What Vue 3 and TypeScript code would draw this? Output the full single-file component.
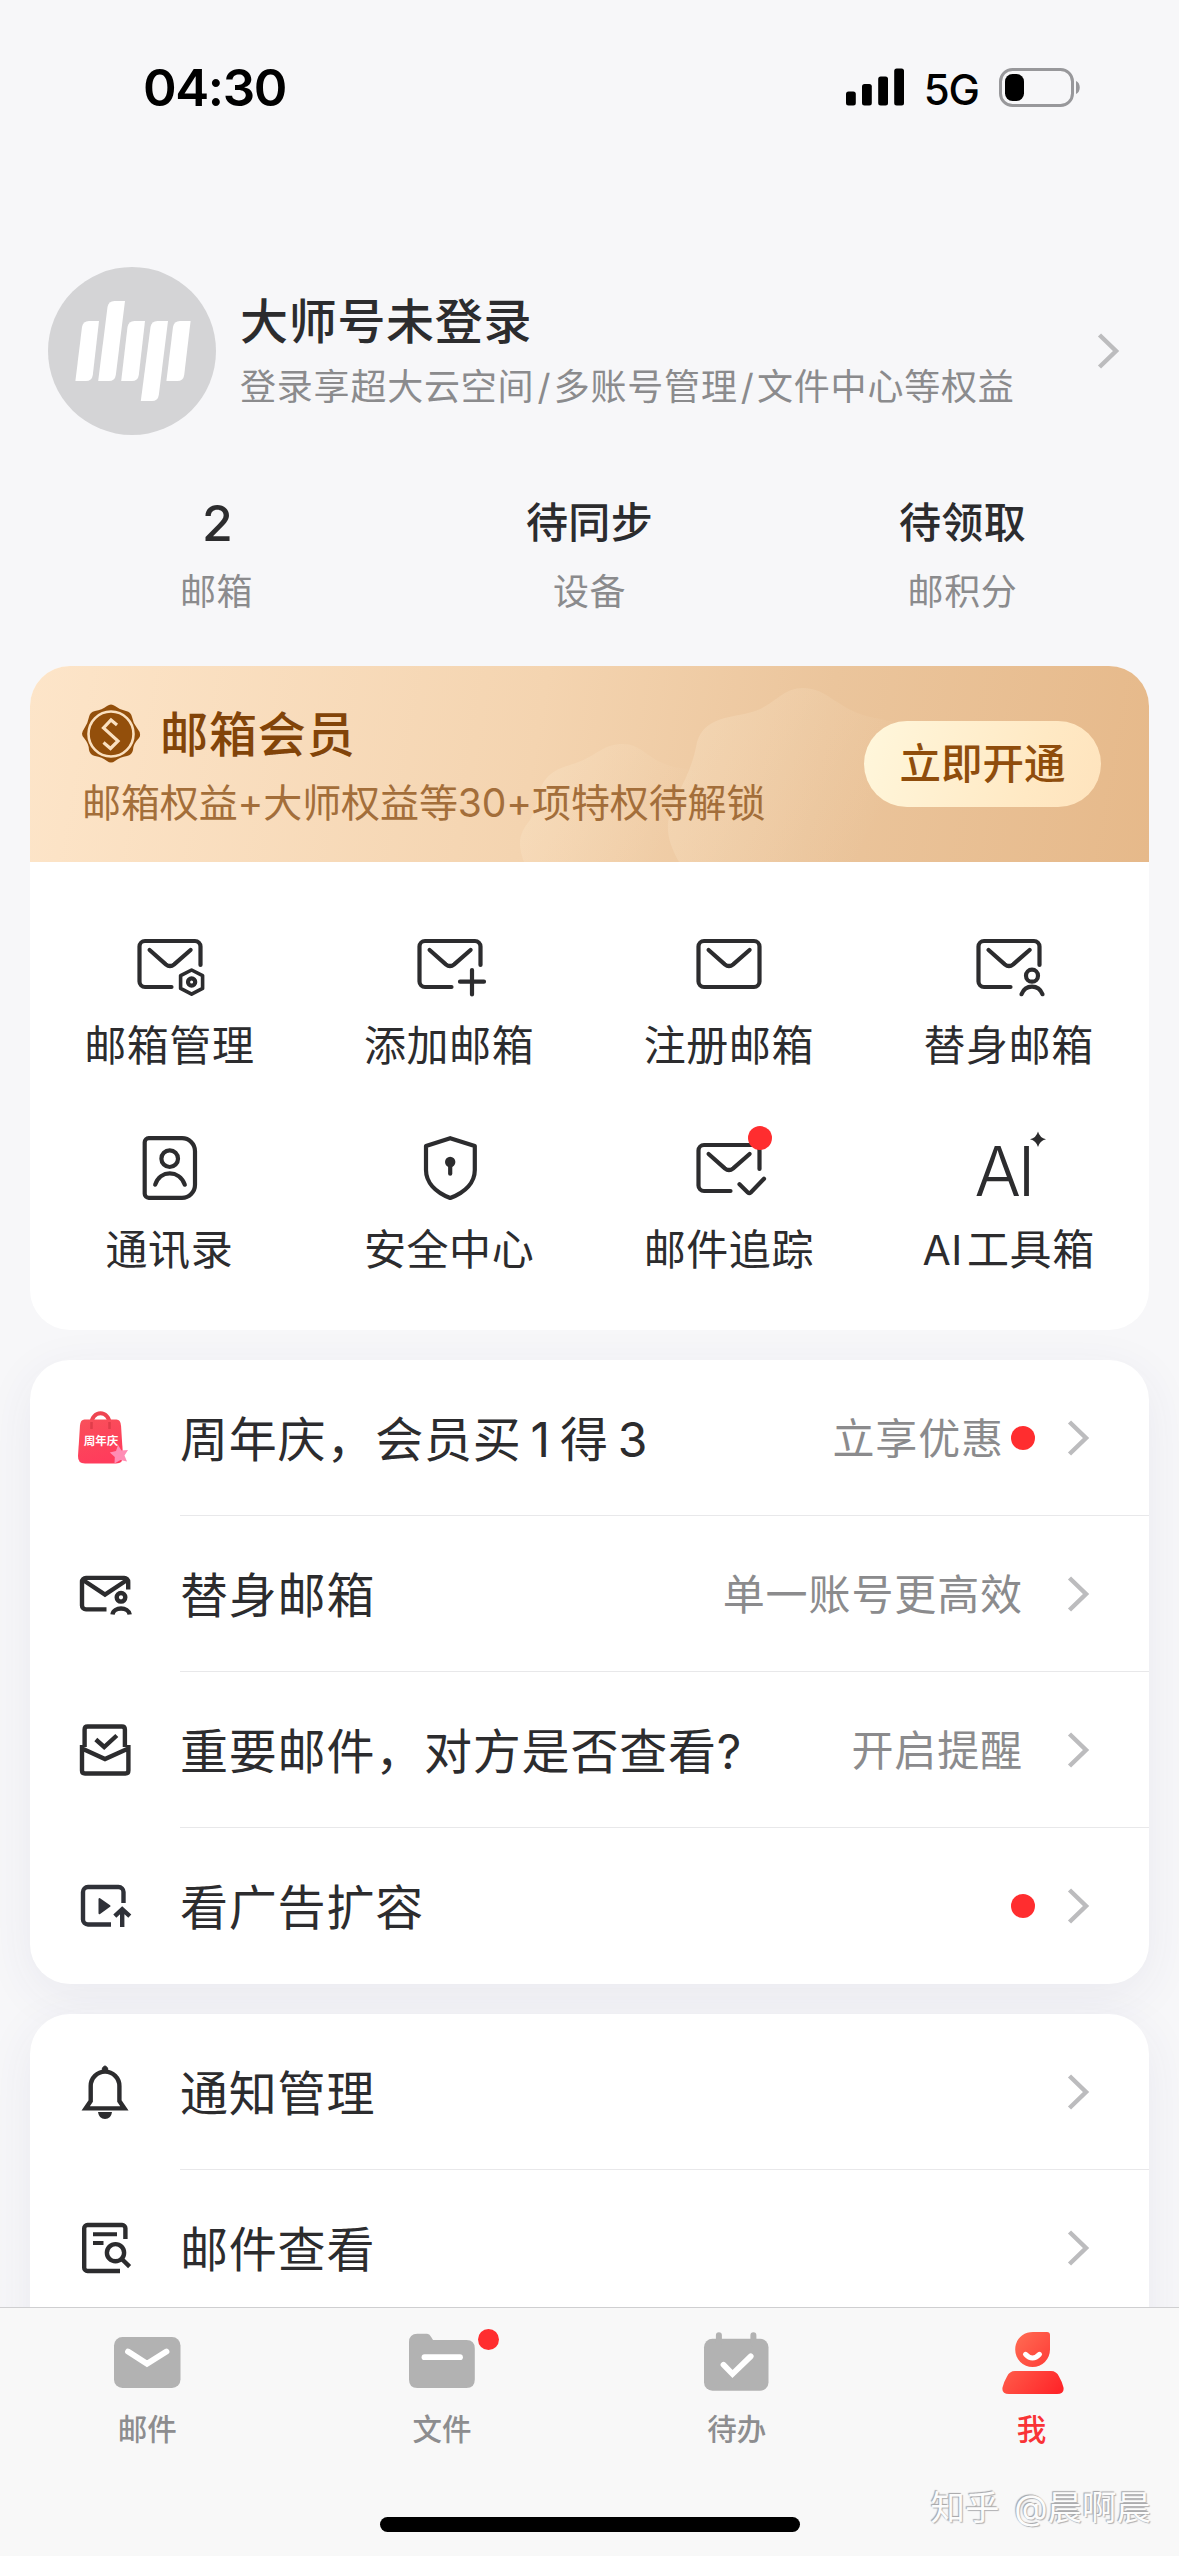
<script setup lang="ts">
interface Tool { id: string; label: string; latin?: string; badge?: boolean }
interface Segment { text: string; latin?: boolean }
interface Entry { id: string; title: Segment[]; note?: string; dot?: boolean }
interface Tab { id: string; label: string; badge?: boolean; active?: boolean }

const stats: { value: string; label: string }[] = [
  { value: '2', label: '邮箱' },
  { value: '待同步', label: '设备' },
  { value: '待领取', label: '邮积分' },
]

const tools: Tool[] = [
  { id: 'manage', label: '邮箱管理' },
  { id: 'add', label: '添加邮箱' },
  { id: 'register', label: '注册邮箱' },
  { id: 'alias', label: '替身邮箱' },
  { id: 'contacts', label: '通讯录' },
  { id: 'security', label: '安全中心' },
  { id: 'track', label: '邮件追踪', badge: true },
  { id: 'ai', label: '工具箱', latin: 'AI' },
]

const groups: Entry[][] = [
  [
    {
      id: 'anniversary',
      title: [{ text: '周年庆，会员买' }, { text: '1', latin: true }, { text: '得' }, { text: '3', latin: true }],
      note: '立享优惠',
      dot: true,
    },
    { id: 'alias', title: [{ text: '替身邮箱' }], note: '单一账号更高效' },
    { id: 'receipt', title: [{ text: '重要邮件，对方是否查看?' }], note: '开启提醒' },
    { id: 'video', title: [{ text: '看广告扩容' }], dot: true },
  ],
  [
    { id: 'bell', title: [{ text: '通知管理' }] },
    { id: 'view', title: [{ text: '邮件查看' }] },
  ],
]

const tabs: Tab[] = [
  { id: 'mail', label: '邮件' },
  { id: 'files', label: '文件', badge: true },
  { id: 'todo', label: '待办' },
  { id: 'me', label: '我', active: true },
]

const cutEnvelope = 'M43.5 65H17a5.5 5.5 0 0 1-5.5-5.5v-35A5.5 5.5 0 0 1 17 19h50a5.5 5.5 0 0 1 5.5 5.5v18.500'
const flap = 'M21.600 28l16.200 14.300q4.200 3.400 8.400 0L62.600 28'
</script>

<template>
  <div class="page">
    <main class="content">
      <header class="status">
        <span class="time">04:30</span>
        <div class="signals">
          <svg class="bars" width="58" height="38" viewBox="0 0 58 38">
            <rect x="0" y="23.500" width="9.800" height="14" rx="2.500" />
            <rect x="16" y="16" width="9.800" height="21.500" rx="2.500" />
            <rect x="32.200" y="8.500" width="9.800" height="29" rx="2.500" />
            <rect x="48.200" y="0.500" width="9.800" height="37" rx="2.500" />
          </svg>
          <span class="net">5G</span>
          <svg class="battery" width="82" height="39" viewBox="0 0 82 39">
            <rect x="1.500" y="1.500" width="72" height="36" rx="12" fill="none" stroke="#98989b" stroke-width="3" />
            <path d="M77 13c5 2 5 11 0 13z" fill="#98989b" />
            <rect x="6" y="6" width="19" height="27" rx="7.500" fill="#000" />
          </svg>
        </div>
      </header>

      <section class="profile">
        <svg class="avatar" width="168" height="168" viewBox="0 0 168 168">
          <circle cx="84" cy="84" r="84" fill="#d4d4d6" />
          <g fill="#fff">
            <path d="M34 60q1-6 7-6h10L44.800 108q-.8 6-7 6H27.400z" />
            <path d="M59.500 40q1-6 7-6h10.500L67.800 108q-.8 6-7 6H50.200z" />
            <path d="M79.500 60q1-6 7-6h10.500L90.800 108q-.8 6-7 6H73.200z" />
            <path d="M102.500 60q1-6 7-6H120L110.800 128q-.8 6-7 6H92.800z" />
            <path d="M125 60q1-6 7-6h10.600L136.200 108q-.8 6-7 6h-10.800z" />
          </g>
        </svg>
        <div class="who">
          <div class="name">大师号未登录</div>
          <div class="perks">登录享超大云空间<i>/</i>多账号管理<i>/</i>文件中心等权益</div>
        </div>
        <svg class="chevron" width="23" height="38" viewBox="0 0 23 38"><path d="M2.500 3L19 19 2.500 35" /></svg>
      </section>

      <section class="stats">
        <div v-for="s in stats" :key="s.label" class="stat">
          <div class="value">{{ s.value }}</div>
          <div class="label">{{ s.label }}</div>
        </div>
      </section>

      <section class="card member">
        <div class="banner">
          <svg class="waves" width="1119" height="196" viewBox="0 0 1119 196">
            <defs>
              <linearGradient id="wave" x1="0" y1="0" x2="1" y2="0.300">
                <stop offset="0" stop-color="#fff0d8" stop-opacity="0.280" />
                <stop offset="0.850" stop-color="#fff0d8" stop-opacity="0" />
              </linearGradient>
            </defs>
            <path fill="url(#wave)" d="M494 196C487 177 489 168 500 154C510 138 506 128 511 121C520 101 538 101 551 95C568 88 574 78 593 78C614 78 618 97 650 102C690 108 690 130 695 150L705 196z" />
            <path fill="url(#wave)" d="M649 196C636 172 634 158 645 134C657 110 663 98 667 76C675 50 702 52 722 46C745 39 752 22 773 22C798 22 805 42 840 51C890 60 905 70 912 95C930 130 950 140 940 196z" />
          </svg>
          <div class="pitch">
            <div class="plan">
              <svg width="60" height="60" viewBox="0 0 60 60">
                <path
                  fill="#934f0b"
                  d="M26 2q4-3 8 0q5 4 11 5q5 1 6 6q1 6 5 11q5 6 2 10q-6 6-6 12q-1 5-6 6q-7 1-12 5q-4 3-8 0q-5-4-12-5q-5-1-6-6q0-6-5-12q-4-4 0-9q4-6 5-12q1-5 6-6q7-1 12-5z"
                />
                <circle cx="30" cy="30" r="22.500" fill="none" stroke="#fae0c0" stroke-width="2.600" />
                <path d="M36 21l-6-5-7.500 8L37 37l-7.500 7.500-7-6" fill="none" stroke="#fae0c0" stroke-width="3.200" />
              </svg>
              <span>邮箱会员</span>
            </div>
            <div class="offer">邮箱权益+大师权益等30+项特权待解锁</div>
          </div>
          <button class="open">立即开通</button>
        </div>
        <div class="grid">
          <div v-for="t in tools" :key="t.id" class="tool">
            <svg class="line" width="84" height="84" viewBox="0 0 84 84">
              <template v-if="t.id === 'manage'">
                <path :d="cutEnvelope" /><path :d="flap" />
                <path d="M63.600 48l11 5.600v12.800l-11 5.800-11-5.800V53.600z" stroke-width="3.600" stroke-linejoin="round" />
                <circle cx="63.600" cy="60" r="3.600" />
              </template>
              <template v-else-if="t.id === 'add'">
                <path :d="cutEnvelope" /><path :d="flap" />
                <path d="M52 59.700h24M64 48v24.500" />
              </template>
              <template v-else-if="t.id === 'register'">
                <rect x="11.500" y="19" width="61" height="46" rx="5.500" /><path :d="flap" />
              </template>
              <template v-else-if="t.id === 'alias'">
                <path :d="cutEnvelope" /><path :d="flap" />
                <circle cx="65" cy="53.700" r="6" />
                <path d="M54.500 72.200c4-10 17-10 21 0" />
              </template>
              <template v-else-if="t.id === 'contacts'">
                <path d="M20.700 12.200H54a13 13 0 0 1 13 13v33.600a13 13 0 0 1-13 13H20.700a4 4 0 0 1-4-4V16.200a4 4 0 0 1 4-4z" />
                <circle cx="41.700" cy="32.700" r="8.300" />
                <path d="M27.200 58.700c5-15 24-15 29.600 0" />
              </template>
              <template v-else-if="t.id === 'security'">
                <path d="M42.200 12.200L66.800 20v24c0 12-9 22-24.600 28C27 66 18 56 18 44V20z" stroke-linejoin="round" />
                <circle cx="42.200" cy="36" r="5.200" fill="#2c2c2e" stroke="none" />
                <path d="M42.200 36v11.700" />
              </template>
              <template v-else-if="t.id === 'track'">
                <path :d="cutEnvelope" /><path :d="flap" />
                <path d="M52.500 58.300l8.300 8.200q1.500 1.300 3 0L77 52.700" />
              </template>
              <template v-else>
                <text y="69.500" class="ai"><tspan x="7.500">A</tspan><tspan x="50.500">I</tspan></text>
                <path d="M71 5.500q1.700 6.300 8 7.800-6.300 1.500-8 7.800-1.700-6.300-8-7.800 6.300-1.500 8-7.800z" fill="#2c2c2e" stroke="none" />
              </template>
            </svg>
            <span v-if="t.badge" class="badge"></span>
            <div class="caption"><span v-if="t.latin" class="latin">{{ t.latin }}</span>{{ t.label }}</div>
          </div>
        </div>
      </section>

      <section v-for="(group, g) in groups" :key="g" class="card list">
        <div v-for="row in group" :key="row.id" class="row">
          <svg class="glyph" width="60" height="60" viewBox="0 0 60 60">
            <template v-if="row.id === 'anniversary'">
              <defs>
                <linearGradient id="bag" x1="0" y1="0" x2="0.300" y2="1">
                  <stop offset="0" stop-color="#f9505a" /><stop offset="1" stop-color="#ff3c5c" />
                </linearGradient>
              </defs>
              <path d="M16.500 22v-6.500a8.800 10 0 0 1 18 0V22" stroke="#ee4552" stroke-width="4" />
              <path d="M9.500 11.500h32q4 0 4.500 6L48 48q.3 7.500-7 7.500H10q-7.300 0-7-7.500l2-30.500q.4-6 4.500-6z" fill="url(#bag)" stroke="none" />
              <path d="M16.500 21v-7M34.500 21v-7" stroke="#e03c4a" stroke-width="2.500" />
              <path d="M43 37l3.500 5.500 6.500-.5-3.500 5.500 2.500 6-6.500-1.500-6 3.500.3-6.500-5-4.500 6.200-1.500z" fill="#ff8db5" stroke="none" />
              <text x="26" y="37" class="bag-text">周年庆</text>
            </template>
            <template v-else-if="row.id === 'alias'">
              <path d="M31.500 45.400H11a4 4 0 0 1-4-4V17.900a4 4 0 0 1 4-4h38.200a4 4 0 0 1 4 4v7.700" />
              <path d="M8 16l22 14.500L52 16" />
              <circle cx="46" cy="33.300" r="4.300" />
              <path d="M37.500 50.500c1-8 16-8 17.200 0" />
            </template>
            <template v-else-if="row.id === 'receipt'">
              <path d="M9.600 27V9.500q0-3 3-3h34.300q3 0 3 3V27" />
              <path d="M7 25v25.500q0 3 3 3h40.400q3 0 3-3V25M7 28.500l23 10.500 23.300-10.500" />
              <path d="M20.800 19.500l8.400 7.500L41.800 15.500" />
            </template>
            <template v-else-if="row.id === 'video'">
              <g stroke="#2f3138">
                <path d="M36 48.500H13a5 5 0 0 1-5-5V16a5 5 0 0 1 5-5h30.500a5 5 0 0 1 5 5v11" />
                <path d="M47.200 51V33M39.800 40.200l7.400-7 7.600 7" />
                <path d="M24.500 23v14.200L34.500 30z" fill="#2f3138" stroke-width="2" stroke-linejoin="round" />
              </g>
            </template>
            <template v-else-if="row.id === 'bell'">
              <path d="M15.700 39V24a14.300 14.300 0 0 1 28.700 0v15l5 7.400H10.700z" />
              <path d="M27.400 9V6.200q2.600-4.500 5.200 0V9z" fill="#2c2c2e" stroke-width="1" />
              <path d="M23 50h14q-1 7-7 7t-7-7z" fill="#2c2c2e" stroke="none" />
            </template>
            <template v-else>
              <path d="M45 53H12.500a3.300 3.300 0 0 1-3.300-3.300V10.300A3.300 3.300 0 0 1 12.500 7h34.600a3.300 3.300 0 0 1 3.300 3.300V21" />
              <path d="M18 16.300h24M18 25h10.500" stroke-width="4" />
              <circle cx="40.500" cy="34.700" r="8.600" />
              <path d="M46.800 41l7.800 7.600" />
            </template>
          </svg>
          <div class="body">
            <div class="title">
              <span v-for="(seg, i) in row.title" :key="i" :class="{ latin: seg.latin }">{{ seg.text }}</span>
            </div>
            <span v-if="row.note" class="note">{{ row.note }}</span>
            <span v-if="row.dot" class="dot"></span>
            <svg class="chevron" width="23" height="38" viewBox="0 0 23 38"><path d="M2.500 3L19 19 2.500 35" /></svg>
          </div>
        </div>
      </section>
    </main>

    <nav class="tabs">
      <div v-for="t in tabs" :key="t.id" class="tab" :class="{ active: t.active }">
        <svg width="72" height="72" viewBox="0 0 72 72">
          <template v-if="t.id === 'mail'">
            <rect x="3" y="10" width="66.500" height="51" rx="8.500" fill="#b2b2b2" />
            <path class="mark" d="M17 24.500l19 12.200 19.500-12.200" />
          </template>
          <template v-else-if="t.id === 'files'">
            <path fill="#b2b2b2" d="M11.500 6.800H21q2.500 0 4 3l2 3.200h33.500q8.300 0 8.300 8.500v31q0 8.500-8.500 8.500h-49Q3 61 3 52.500V15.300q0-8.500 8.500-8.500z" />
            <path class="mark" d="M18.500 30.200h35.500" />
          </template>
          <template v-else-if="t.id === 'todo'">
            <rect x="3" y="11.700" width="64.500" height="52" rx="8.500" fill="#b2b2b2" />
            <path d="M17.900 8.300v8M52.400 8.300v8" fill="none" stroke="#b2b2b2" stroke-width="6" stroke-linecap="round" />
            <path class="mark" d="M22.500 37.800l9 9.200 18.200-17.700" />
          </template>
          <template v-else>
            <defs>
              <linearGradient id="me" gradientUnits="userSpaceOnUse" x1="10" y1="20" x2="62" y2="66">
                <stop offset="0" stop-color="#ff6a52" /><stop offset="1" stop-color="#ff2529" />
              </linearGradient>
            </defs>
            <path fill="url(#me)" d="M37 5h14q3 0 3 3v14.500a17.400 17.500 0 1 1-34.800 0C19.200 12 27 5 37 5z" />
            <path fill="none" stroke="#fff" stroke-width="5" stroke-linecap="round" d="M29.500 27.300q7 7.500 14 0" />
            <path fill="url(#me)" d="M19 44h36q5.500 0 8 5.500 3.500 6 4.500 11Q68.500 67 61 67H13q-7.500 0-6.500-6.500 1-5 4.500-11 2.500-5.500 8-5.500z" />
          </template>
        </svg>
        <span v-if="t.badge" class="badge"></span>
        <div class="tab-label">{{ t.label }}</div>
      </div>
    </nav>
    <div class="home"></div>
    <div class="watermark">知乎 @晨啊晨</div>
  </div>
</template>

<style>
body {
  margin: 0;
  background: #f7f7f9;
}
</style>

<style scoped>
.page {
  position: relative;
  display: flex;
  flex-direction: column;
  width: 1179px;
  height: 2556px;
  overflow: hidden;
  background: #f7f7f9;
  color: #2c2c2e;
  font-family: Inter, "Noto Sans CJK SC", sans-serif;
  text-autospace: no-autospace;
}
.content {
  flex: 1;
  min-height: 0;
  overflow: hidden;
}
.status {
  display: flex;
  justify-content: space-between;
  align-items: flex-start;
  box-sizing: border-box;
  height: 267px;
  padding: 68px 98px 0 143px;
  color: #000;
}
.time {
  font-size: 51px;
  font-weight: 600;
  line-height: 40px;
  letter-spacing: -1.4px;
}
.signals {
  display: flex;
  align-items: flex-start;
}
.net {
  margin: 1px 20px 0 20px;
  font-size: 42px;
  font-weight: 500;
  line-height: 42px;
  letter-spacing: -1px;
}
.profile {
  display: flex;
  align-items: center;
  height: 168px;
  padding: 0 59px 0 48px;
}
.who {
  flex: 1;
  margin-left: 24px;
}
.name {
  padding-top: 6px;
  font-size: 48px;
  font-weight: 500;
  line-height: 66px;
  letter-spacing: 0.7px;
}
.perks {
  font-size: 36px;
  line-height: 64px;
  margin-top: 0;
  color: #8b8b8d;
  letter-spacing: 0.8px;
  white-space: nowrap;
}
.perks i {
  font-style: normal;
  margin: 0 2.500px 0 3px;
}
.chevron {
  flex: none;
  fill: none;
  stroke: #bcbcbe;
  stroke-width: 4.5;
}
.stats {
  display: flex;
  padding: 58px 30px 49px;
  text-align: center;
}
.stat {
  flex: 1;
}
.value {
  font-size: 42px;
  font-weight: 500;
  line-height: 60px;
  letter-spacing: 0.4px;
}
.stat:first-child .value {
  padding-left: 2px;
  font-size: 50px;
  font-weight: 500;
}
.label {
  margin-top: 14px;
  font-size: 36px;
  line-height: 50px;
  letter-spacing: 0.6px;
  color: #8b8b8d;
}
.card {
  margin: 0 30px 30px;
  border-radius: 40px;
  background: #fff;
  box-shadow: 0 12px 50px rgba(60, 60, 110, 0.07);
}
.card:last-child {
  padding-bottom: 60px;
}
.member {
  height: 664px;
  margin-bottom: 30px;
  overflow: hidden;
  box-shadow: none;
}
.banner {
  position: relative;
  display: flex;
  justify-content: space-between;
  align-items: center;
  box-sizing: border-box;
  height: 196px;
  padding: 0 48px 0 52px;
  background: linear-gradient(100deg, #fde5c9 0%, #f4d4b0 45%, #ebc59c 70%, #e6b98a 100%);
}
.waves {
  position: absolute;
  left: 0;
  top: 0;
}
.pitch {
  position: relative;
  padding-top: 4px;
}
.plan {
  display: flex;
  align-items: center;
  gap: 19px;
  margin-left: -1px;
  font-size: 48px;
  font-weight: 500;
  line-height: 60px;
  letter-spacing: 0.9px;
  color: #824409;
}
.plan span {
  padding-top: 1px;
}
.offer {
  margin-top: 12px;
  font-size: 39px;
  line-height: 52px;
  letter-spacing: -0.1px;
  color: #a36e3a;
  white-space: nowrap;
}
.open {
  position: relative;
  width: 237px;
  height: 86px;
  padding: 0;
  border: 0;
  border-radius: 43px;
  background: linear-gradient(110deg, #fff7dc, #ffe9c4 70%, #fee3bd);
  color: #8f4d0c;
  font: 500 41.5px/86px Inter, "Noto Sans CJK SC", sans-serif;
}
.grid {
  display: grid;
  grid-template-columns: repeat(4, 1fr);
  padding-top: 60px;
}
.tool {
  position: relative;
  display: flex;
  flex-direction: column;
  align-items: center;
  height: 204px;
}
.line {
  overflow: visible;
  fill: none;
  stroke: #2c2c2e;
  stroke-width: 4.2;
  stroke-linecap: round;
}
.ai {
  fill: #2c2c2e;
  stroke: none;
  font-family: Inter, sans-serif;
  font-size: 69px;
  font-weight: 300;
}
.caption {
  margin-top: 10px;
  margin-right: 1px;
  font-size: 42px;
  line-height: 60px;
  letter-spacing: 0.6px;
  white-space: nowrap;
}
.caption .latin {
  margin-right: 4px;
  font-size: 41px;
}
.badge {
  position: absolute;
  border-radius: 50%;
  background: #ff2d2f;
}
.tool .badge {
  left: 158px;
  top: 0;
  width: 24px;
  height: 24px;
}
.row {
  display: flex;
  align-items: center;
  height: 156px;
  padding-left: 45px;
}
.glyph {
  flex: none;
  fill: none;
  stroke: #2c2c2e;
  stroke-width: 4.4;
}
.bag-text {
  fill: #fff;
  stroke: none;
  font-size: 11.5px;
  font-weight: 700;
  text-anchor: middle;
}
.body {
  flex: 1;
  display: flex;
  align-items: center;
  box-sizing: border-box;
  height: 156px;
  margin-left: 45px;
  padding-right: 59px;
}
.row + .row .body {
  box-shadow: 0 -1px #e8e8ea;
}
.title {
  flex: 1;
  padding-top: 3px;
  font-size: 48px;
  line-height: 70px;
  letter-spacing: 0.8px;
  white-space: nowrap;
}
.title .latin {
  margin: 0 9px;
}
.note {
  padding-top: 2px;
  font-size: 42px;
  line-height: 60px;
  letter-spacing: 0.9px;
  color: #8b8b8d;
}
.dot {
  width: 24px;
  height: 24px;
  margin: 0 -12px 0 8px;
  border-radius: 50%;
  background: #ff2d2f;
}
.note:has(+ .dot) {
  margin-right: -1px;
}
.body .chevron {
  margin-left: 44px;
}
.tabs {
  position: relative;
  display: flex;
  box-sizing: border-box;
  height: 249px;
  padding-top: 19px;
  border-top: 1px solid #cfcfd1;
  background: #f8f8f8;
}
.tab {
  position: relative;
  flex: 1;
  display: flex;
  flex-direction: column;
  align-items: center;
}
.tab-label {
  margin-top: 10px;
  font-size: 29.5px;
  font-weight: 500;
  line-height: 40px;
  color: #8d8d8f;
}
.active .tab-label {
  color: #f93336;
}
.mark {
  fill: none;
  stroke: #fff;
  stroke-width: 5.8;
  stroke-linecap: round;
}
.tab .badge {
  left: 183px;
  top: 2px;
  width: 21px;
  height: 21px;
}
.home {
  position: absolute;
  left: 380px;
  top: 2517px;
  width: 420px;
  height: 15px;
  border-radius: 8px;
  background: #000;
}
.watermark {
  position: absolute;
  right: 28px;
  top: 2484px;
  font-size: 34.5px;
  line-height: 48px;
  color: #fcfcfc;
  word-spacing: 5px;
  text-shadow: -1px -1px 1px #a4a4a6, 1px 1px 1px #b0b0b2;
  white-space: nowrap;
}
</style>
